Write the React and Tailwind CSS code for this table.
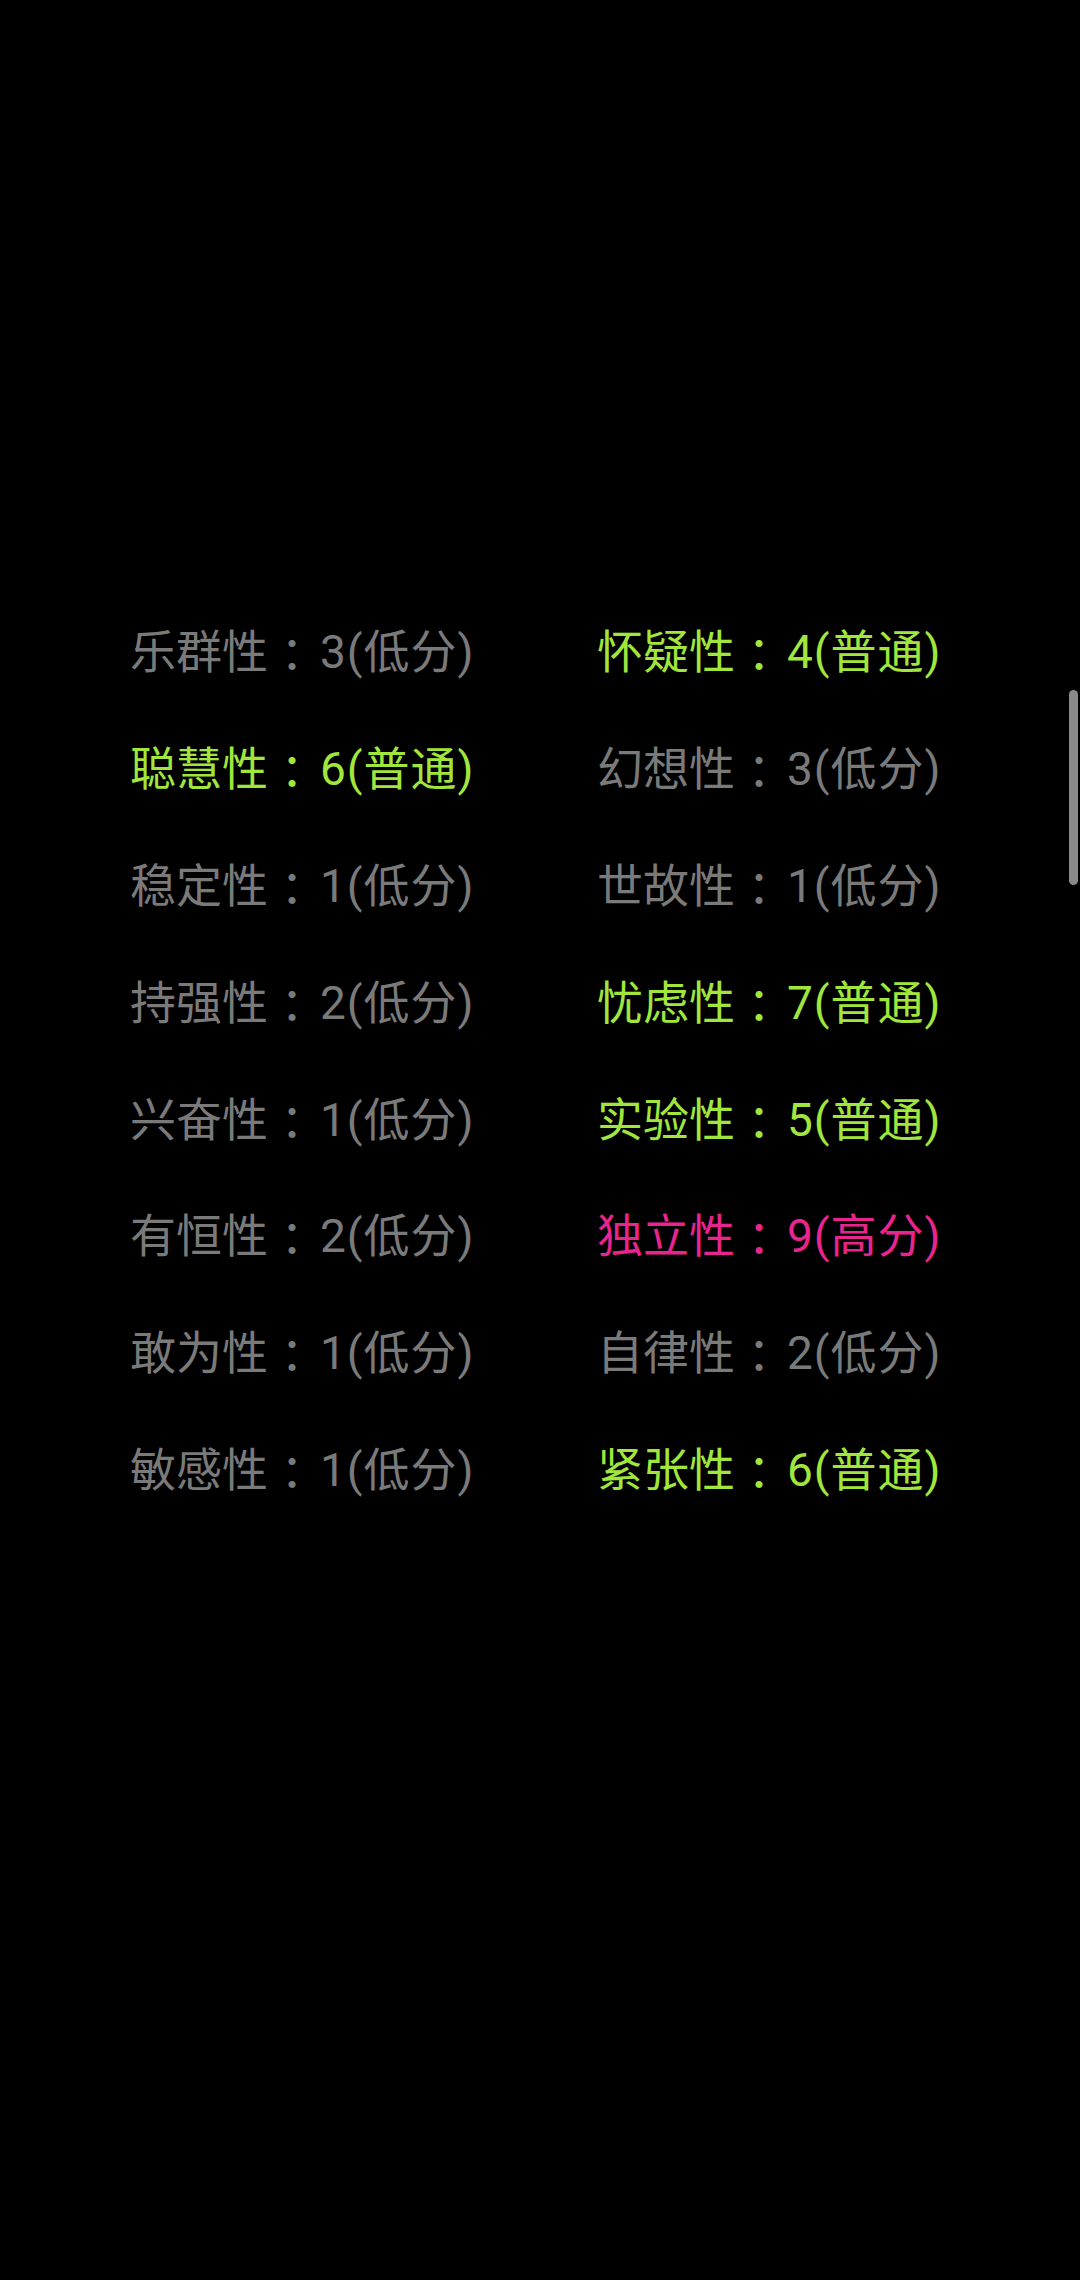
const traits = [
  ['乐群性', 3, '低分'],
  ['怀疑性', 4, '普通'],
  ['聪慧性', 6, '普通'],
  ['幻想性', 3, '低分'],
  ['稳定性', 1, '低分'],
  ['世故性', 1, '低分'],
  ['持强性', 2, '低分'],
  ['忧虑性', 7, '普通'],
  ['兴奋性', 1, '低分'],
  ['实验性', 5, '普通'],
  ['有恒性', 2, '低分'],
  ['独立性', 9, '高分'],
  ['敢为性', 1, '低分'],
  ['自律性', 2, '低分'],
  ['敏感性', 1, '低分'],
  ['紧张性', 6, '普通'],
]

const tones = {
  低分: 'text-[#7a7a7a]',
  普通: 'text-[#a0e63c]',
  高分: 'text-[#e8258e]',
}

export default function App() {
  return (
    <div
      className="relative min-h-[2280px] w-[1080px] bg-black"
      style={{ fontFamily: 'Roboto, "Noto Sans CJK SC", sans-serif' }}
    >
      <div className="grid grid-cols-[467px_1fr] auto-rows-[116.8px] pl-[130px] pt-[594px] text-[46px]">
        {traits.map(([name, score, level]) => (
          <div key={name} className={`flex items-center whitespace-nowrap leading-none ${tones[level]}`}>
            <span>{name}</span>
            <span className="ml-[1px] mr-[5px]" style={{ fontFamily: '"Noto Sans CJK TC", sans-serif' }}>
              ：
            </span>
            <span className="tracking-[1px]">
              {score}({level})
            </span>
          </div>
        ))}
      </div>

      <div className="absolute right-[2px] top-[690px] h-[195px] w-[9px] rounded-full bg-[#8a8a8a]" />
    </div>
  )
}
